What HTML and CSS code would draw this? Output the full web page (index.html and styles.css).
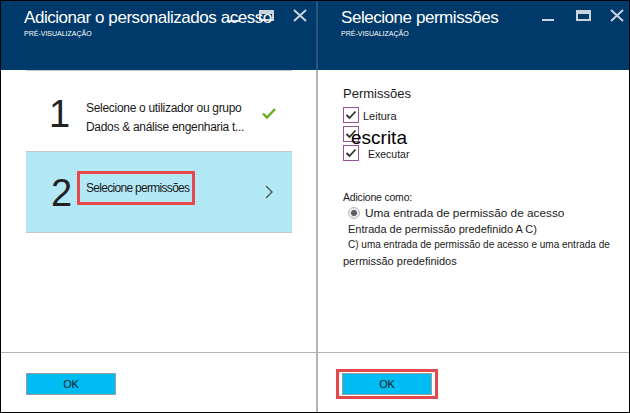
FILE: index.html
```html
<!DOCTYPE html>
<html lang="pt">
<head>
<meta charset="utf-8">
<title>Selecione permissões</title>
<link rel="stylesheet" href="styles.css">
</head>
<body>
<div class="window">
  <section class="blade blade-left">
    <header class="blade-header">
      <svg class="win-icons" width="86" height="14" viewBox="0 0 86 14">
        <rect x="4" y="11" width="13" height="2"/>
        <rect x="36" y="1" width="15" height="4"/>
        <rect x="37" y="2" width="13" height="9" fill="none" stroke="currentColor" stroke-width="2"/>
        <path d="M71 1 L83 12 M83 1 L71 12" stroke="currentColor" stroke-width="2" fill="none"/>
      </svg>
      <h1 class="blade-title">Adicionar o personalizados acesso</h1>
      <div class="blade-sub">PRÉ-VISUALIZAÇÃO</div>
    </header>
    <div class="blade-body">
      <div class="steps">
        <div class="step step-done">
          <div class="step-num">1</div>
          <div class="step-text">
            <div>Selecione o utilizador ou grupo</div>
            <div>Dados &amp; análise engenharia t...</div>
          </div>
          <svg class="step-check" width="14" height="11" viewBox="0 0 14 11">
            <path d="M1 5.5 L5 9.5 L13 1" stroke="#6aaa1e" stroke-width="2.4" fill="none"/>
          </svg>
        </div>
        <div class="step step-active">
          <div class="step-num step-num-2">2</div>
          <div class="step-label">Selecione permissões</div>
          <svg class="step-chevron" width="8" height="14" viewBox="0 0 8 14">
            <path d="M1 1 L7 7 L1 13" stroke="#4a4a4a" stroke-width="1.2" fill="none"/>
          </svg>
        </div>
      </div>
    </div>
    <footer class="blade-footer">
      <button class="ok-btn" type="button">OK</button>
    </footer>
  </section>
  <div class="divider"></div>
  <section class="blade blade-right">
    <header class="blade-header">
      <svg class="win-icons" width="86" height="14" viewBox="0 0 86 14">
        <rect x="2" y="10" width="12" height="2"/>
        <rect x="36" y="1" width="15" height="4"/>
        <rect x="37" y="2" width="13" height="9" fill="none" stroke="currentColor" stroke-width="2"/>
        <path d="M71 1 L83 12 M83 1 L71 12" stroke="currentColor" stroke-width="2" fill="none"/>
      </svg>
      <h1 class="blade-title">Selecione permissões</h1>
      <div class="blade-sub">PRÉ-VISUALIZAÇÃO</div>
    </header>
    <div class="blade-body perm-body">
      <div class="perm-title">Permissões</div>
      <div class="checks">
        <div class="check-row">
          <span class="checkbox"><svg width="14" height="14" viewBox="0 0 14 14"><path d="M2.5 7 L5.5 10 L11.5 3.5" stroke="#333" stroke-width="1.8" fill="none"/></svg></span>
          <span class="check-label label-read">Leitura</span>
        </div>
        <div class="check-row">
          <span class="checkbox"><svg width="14" height="14" viewBox="0 0 14 14"><path d="M2.5 7 L5.5 10 L11.5 3.5" stroke="#333" stroke-width="1.8" fill="none"/></svg></span>
          <span class="check-label label-write">escrita</span>
        </div>
        <div class="check-row">
          <span class="checkbox"><svg width="14" height="14" viewBox="0 0 14 14"><path d="M2.5 7 L5.5 10 L11.5 3.5" stroke="#333" stroke-width="1.8" fill="none"/></svg></span>
          <span class="check-label label-exec">Executar</span>
        </div>
      </div>
      <div class="add-as">Adicione como:</div>
      <div class="radio-row"><span class="radio"></span><span class="radio-label">Uma entrada de permissão de acesso</span></div>
      <div class="opt-line opt-b">Entrada de permissão predefinido A C)</div>
      <div class="opt-line opt-c">C) uma entrada de permissão de acesso e uma entrada de</div>
      <div class="opt-line opt-d">permissão predefinidos</div>
    </div>
    <footer class="blade-footer footer-right">
      <span class="highlight-box"><button class="ok-btn" type="button">OK</button></span>
    </footer>
  </section>
</div>
</body>
</html>
```
FILE: styles.css
```css
html, body {
  margin: 0;
  padding: 0;
  background: #fff;
}

body {
  font-family: "Liberation Sans", Arial, sans-serif;
  color: #1a1a1a;
}

.window {
  width: 630px;
  height: 413px;
  box-sizing: border-box;
  border: 1px solid #000;
  display: flex;
  overflow: hidden;
}

.blade {
  display: flex;
  flex-direction: column;
  height: 100%;
}

.blade-left {
  width: 315px;
}

.blade-right {
  width: 311px;
}

.divider {
  width: 2px;
  background: linear-gradient(to bottom, #28567f 0, #28567f 69px, #b4b4b4 69px, #b4b4b4 100%);
}

.blade-header {
  position: relative;
  height: 69px;
  box-sizing: border-box;
  background: #003a6a;
  padding: 7px 0 0 23px;
  color: #fff;
  flex: none;
}

.win-icons {
  position: absolute;
  left: 222px;
  top: 8px;
  color: #c9d4df;
  fill: #c9d4df;
  z-index: 0;
}

.blade-title {
  position: relative;
  z-index: 1;
  margin: 0;
  font-size: 17px;
  line-height: 20px;
  font-weight: normal;
  letter-spacing: -0.45px;
  white-space: nowrap;
}

.blade-sub {
  position: relative;
  z-index: 1;
  margin-top: 1px;
  font-size: 7px;
  line-height: 9px;
}

.blade-body {
  flex: 1;
}

.steps {
  margin: 0 24px 0 25px;
}

.step {
  display: flex;
  align-items: flex-start;
  height: 80px;
  border-top: 1px solid #c8c8c8;
}

.step-active {
  background: #b3e8f7;
  border-bottom: 1px solid #c8c8c8;
}

.step-num {
  width: 60px;
  box-sizing: border-box;
  padding-left: 23px;
  margin-top: 24px;
  font-size: 38px;
  line-height: 38px;
  color: #222;
  flex: none;
}

.step-num-2 {
  margin-top: 22px;
  padding-left: 25px;
}

.step-text {
  flex: 1;
  margin-top: 28px;
  font-size: 12px;
  line-height: 19px;
  letter-spacing: -0.3px;
  white-space: nowrap;
}

.step-check {
  margin: 37px 16px 0 0;
  flex: none;
}

.step-label {
  margin: 19px 0 0 -9px;
  border: 3px solid #e3484a;
  padding: 0 3px 0 6px;
  font-size: 12px;
  line-height: 28px;
  letter-spacing: -0.7px;
  white-space: nowrap;
}

.step-chevron {
  margin: 33px 19px 0 auto;
  flex: none;
}

.blade-footer {
  height: 59px;
  flex: none;
  border-top: 1px solid #b4b4b4;
  padding: 20px 0 0 25px;
  box-sizing: content-box;
}

.footer-right {
  padding: 16px 0 0 18px;
  height: 43px;
}

.blade-left .blade-footer {
  height: 39px;
}

.ok-btn {
  display: block;
  width: 90px;
  height: 22px;
  box-sizing: border-box;
  border: 1px solid #9c9c9c;
  background: #00bcf2;
  padding: 0;
  font-family: "Liberation Sans", Arial, sans-serif;
  font-size: 11px;
  color: #1b1b1b;
  letter-spacing: -0.3px;
}

.highlight-box {
  display: inline-block;
  border: 3px solid #e3484a;
  padding: 1px 3px;
}

.perm-body {
  padding: 16px 0 0 25px;
}

.perm-title {
  font-size: 13px;
  line-height: 16px;
  color: #1a1a1a;
}

.checks {
  margin-top: 5px;
}

.check-row {
  display: flex;
  align-items: flex-start;
  height: 19px;
  white-space: nowrap;
}

.checkbox {
  width: 16px;
  height: 16px;
  box-sizing: border-box;
  border: 1px solid #9b519a;
  display: flex;
  align-items: center;
  justify-content: center;
  flex: none;
}

.check-label {
  font-size: 11px;
  line-height: 19px;
}

.label-read {
  margin-left: 4px;
}

.label-write {
  position: relative;
  margin-left: -8px;
  font-size: 19px;
  line-height: 19px;
  margin-top: 2px;
  color: #000;
}

.label-exec {
  margin-left: 9px;
  font-size: 10.5px;
}

.add-as {
  margin-top: 25px;
  font-size: 10.5px;
  line-height: 16px;
  letter-spacing: -0.2px;
}

.radio-row {
  display: flex;
  align-items: center;
  height: 16px;
  padding-left: 5px;
}

.radio {
  width: 12px;
  height: 12px;
  box-sizing: border-box;
  border-radius: 50%;
  border: 1px solid #b8b8b8;
  background: radial-gradient(circle, #5e5e5e 0, #5e5e5e 2.6px, #e6e6e6 3.4px, #fff 100%);
  flex: none;
}

.radio-label {
  margin-left: 5px;
  font-size: 11.8px;
  line-height: 16px;
}

.opt-line {
  white-space: nowrap;
}

.opt-b {
  padding-left: 5px;
  font-size: 11px;
  line-height: 16px;
}

.opt-c {
  padding-left: 5px;
  font-size: 10px;
  line-height: 15px;
}

.opt-d {
  font-size: 11px;
  line-height: 18px;
}
```
